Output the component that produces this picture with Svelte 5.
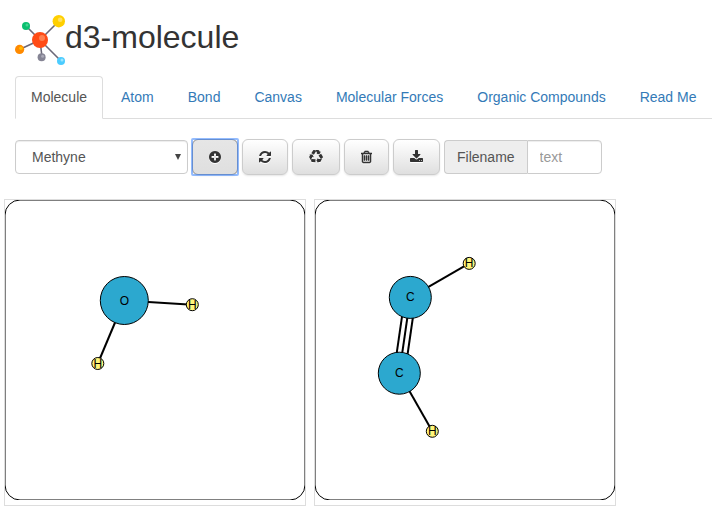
<script>
  const tabs = ['Molecule', 'Atom', 'Bond', 'Canvas', 'Molecular Forces', 'Organic Compounds', 'Read Me'];
  let active = $state('Molecule');
  let compound = $state('Methyne');
  let filename = $state('');

  const actions = [
    {
      label: 'Add molecule', x: 128, units: 1536, width: 12,
      d: 'M1344 960v-128q0-26-19-45t-45-19h-256v-256q0-26-19-45t-45-19h-128q-26 0-45 19t-19 45v256h-256q-26 0-45 19t-19 45v128q0 26 19 45t45 19h256v256q0 26 19 45t45 19h128q26 0 45-19t19-45v-256h256q26 0 45-19t19-45zm320-64q0 209-103 385.500t-279.500 279.500-385.500 103-385.500-103-279.500-279.500-103-385.500 103-385.500 279.500-279.500 385.500-103 385.500 103 279.500 279.500 103 385.500z'
    },
    {
      label: 'Refresh', x: 128, units: 1536, width: 12,
      d: 'M1639 1056q0 5-1 7-64 268-268 434.500t-478 166.500q-146 0-282.500-55t-243.500-157l-129 129q-19 19-45 19t-45-19-19-45v-448q0-26 19-45t45-19h448q26 0 45 19t19 45-19 45l-137 137q71 66 161 102t187 36q134 0 250-65t186-179q11-17 53-117 8-23 30-23h192q13 0 22.500 9.500t9.500 22.500zm25-800v448q0 26-19 45t-45 19h-448q-26 0-45-19t-19-45 19-45l138-138q-148-137-349-137-134 0-250 65t-186 179q-11 17-53 117-8 23-30 23h-199q-13 0-22.500-9.500t-9.500-22.500v-7q65-268 270-434.500t480-166.500q146 0 284 55.500t245 156.500l130-129q19-19 45-19t45 19 19 45z'
    },
    {
      label: 'Recycle', x: 0, units: 1792, width: 14,
      d: 'M836 1169l-15 368-2 22-420-29q-36-3-67-31.500t-47-65.500q-11-27-14.500-55t4-65 12-55 21.500-64 19-53q78 12 509 28zm-387-586l180 379-147-92q-63 72-111.500 144.500t-72.500 125-39.500 94.500-18.500 63l-4 21-190-357q-17-26-18-56t6-47l8-18q35-63 114-188l-140-86zm1231 517l-188 359q-12 29-36.500 46.500t-43.500 20.500l-18 4q-71 7-219 12l8 164-230-367 211-362 7 173q170 16 283 5t170-33zm-785-924q-47 63-265 435l-317-187-19-12 225-356q20-31 60-45t80-10q24 2 48.500 12t42 21 41.500 33 36 34.500 36 39.500 32 35zm655 307l212 363q18 37 12.500 76t-27.500 74q-13 20-33 37t-38 28-48.500 22-47 16-51.500 14-46 12q-34-72-265-436l313-195zm-143-226l142-83-220 373-419-20 151-86q-34-89-75-166t-75.500-123.500-64.500-80-47-46.500l-17-13 405 1q31-3 58 10.500t39 28.500l11 15q39 61 112 190z'
    },
    {
      label: 'Delete', x: 192, units: 1408, width: 11, weight: 70,
      d: 'M704 736v576q0 14-9 23t-23 9h-64q-14 0-23-9t-9-23v-576q0-14 9-23t23-9h64q14 0 23 9t9 23zm256 0v576q0 14-9 23t-23 9h-64q-14 0-23-9t-9-23v-576q0-14 9-23t23-9h64q14 0 23 9t9 23zm256 0v576q0 14-9 23t-23 9h-64q-14 0-23-9t-9-23v-576q0-14 9-23t23-9h64q14 0 23 9t9 23zm128 724v-948h-896v948q0 22 7 40.500t14.500 27 10.500 8.500h832q3 0 10.500-8.500t14.500-27 7-40.500zm-672-1076h448l-48-117q-7-9-17-11h-317q-10 2-17 11zm928 32v64q0 14-9 23t-23 9h-96v948q0 83-47 143.500t-113 60.500h-832q-66 0-113-58.500t-47-141.500v-952h-96q-14 0-23-9t-9-23v-64q0-14 9-23t23-9h309l70-167q15-37 54-63t79-26h320q40 0 79 26t54 63l70 167h309q14 0 23 9t9 23z'
    },
    {
      label: 'Download', x: 64, units: 1664, width: 13,
      d: 'M1344 1344q0-26-19-45t-45-19-45 19-19 45 19 45 45 19 45-19 19-45zm256 0q0-26-19-45t-45-19-45 19-19 45 19 45 45 19 45-19 19-45zm128-224v320q0 40-28 68t-68 28h-1472q-40 0-68-28t-28-68v-320q0-40 28-68t68-28h465l135 136q58 56 136 56t136-56l136-136h464q40 0 68 28t28 68zm-325-569q17 41-14 70l-448 448q-18 19-45 19t-45-19l-448-448q-31-29-14-70 17-39 59-39h256v-448q0-26 19-45t45-19h256q26 0 45 19t19 45v448h256q42 0 59 39z'
    }
  ];

  const molecules = [
    {
      name: 'Water',
      bonds: [[119.3, 100.5, 187.3, 104.7], [119.3, 100.5, 92.8, 163.5]],
      atoms: [
        { symbol: 'O', x: 119.3, y: 100.5, r: 24 },
        { symbol: 'H', x: 187.3, y: 104.7, r: 6 },
        { symbol: 'H', x: 92.8, y: 163.5, r: 6 }
      ]
    },
    {
      name: 'Ethyne',
      bonds: [
        [95.3, 97.4, 84.3, 173.2],
        [89.9, 96.6, 78.9, 172.4],
        [100.7, 98.2, 89.7, 174],
        [95.3, 97.4, 154.2, 63.4],
        [84.3, 173.2, 117.3, 231.3]
      ],
      atoms: [
        { symbol: 'C', x: 95.3, y: 97.4, r: 21 },
        { symbol: 'C', x: 84.3, y: 173.2, r: 21 },
        { symbol: 'H', x: 154.2, y: 63.4, r: 6 },
        { symbol: 'H', x: 117.3, y: 231.3, r: 6 }
      ]
    }
  ];
</script>

<div class="page">
  <header>
    <svg class="logo" viewBox="0 0 50 50" aria-hidden="true">
      <g stroke="#6b6878" stroke-width="1.6">
        <path d="M25 25 44 6M25 25 11 11M25 25 4.500 34.500M25 25 27 42M25 25 46 46" />
      </g>
      <circle cx="43.800" cy="6.200" r="6.200" fill="#ffcf00" />
      <circle cx="45.200" cy="4.700" r="2.300" fill="#ffe15e" />
      <circle cx="11" cy="11" r="4" fill="#0abf70" />
      <circle cx="12" cy="10" r="1.500" fill="#46d48f" />
      <circle cx="4.600" cy="34.400" r="4.600" fill="#ff8a00" />
      <circle cx="5.900" cy="33.200" r="1.800" fill="#ffbd00" />
      <circle cx="26.600" cy="42.300" r="4" fill="#858494" />
      <circle cx="27.600" cy="41.300" r="1.500" fill="#aaa9b7" />
      <circle cx="46" cy="46" r="4" fill="#4cccff" />
      <circle cx="47" cy="45" r="1.500" fill="#9be5ff" />
      <circle cx="25" cy="25" r="8" fill="#ff4b16" />
      <circle cx="27" cy="23" r="3" fill="#ff8050" />
    </svg>
    <h1>d3-molecule</h1>
  </header>

  <nav>
    {#each tabs as tab}
      <a href="#{tab.toLowerCase().replace(' ', '-')}" class:active={active === tab} onclick={() => (active = tab)}>{tab}</a>
    {/each}
  </nav>

  <div class="toolbar">
    <div class="select">
      <select aria-label="Compound" bind:value={compound}>
        <option>Methyne</option>
        <option>Water</option>
        <option>Ethyne</option>
      </select>
      <svg class="caret" viewBox="0 0 6 6" aria-hidden="true"><path d="M0 0h6L3 6z" /></svg>
    </div>
    {#each actions as action, i}
      <button type="button" class:focused={i === 0} aria-label={action.label}>
        <svg viewBox="{action.x} 0 {action.units} 1792" style:width="{action.width}px" aria-hidden="true">
          <path d={action.d} stroke="#333" stroke-width={action.weight ?? 0} />
        </svg>
      </button>
    {/each}
    <div class="group">
      <label for="filename">Filename</label>
      <input id="filename" type="text" placeholder="text" bind:value={filename} />
    </div>
  </div>

  <main>
    {#each molecules as molecule}
      <div class="frame">
        <svg width="300" height="300" role="img" aria-label={molecule.name}>
          <rect width="300" height="300" rx="15" fill="none" stroke="#000" />
          {#each molecule.bonds as [x1, y1, x2, y2]}
            <line {x1} {y1} {x2} {y2} />
          {/each}
          {#each molecule.atoms as atom}
            <circle class="atom" class:hydrogen={atom.symbol === 'H'} cx={atom.x} cy={atom.y} r={atom.r} />
            <text x={atom.x} y={atom.y} dy="4">{atom.symbol}</text>
          {/each}
        </svg>
      </div>
    {/each}
  </main>
</div>

<style>
  :global(body) {
    margin: 0;
    background: #fff;
  }
  .page {
    overflow: hidden;
    padding-bottom: 16px;
    font: 14px/20px "Liberation Sans", Arial, sans-serif;
    color: #333;
  }
  .page * {
    box-sizing: border-box;
  }
  header {
    display: flex;
    padding: 15px 15px 11px;
  }
  .logo {
    width: 50px;
    height: 50px;
    overflow: visible;
  }
  h1 {
    margin: 4px 0 0;
    font-size: 32px;
    line-height: 36px;
    font-weight: 400;
  }
  nav {
    display: flex;
    gap: 2px;
    margin-left: 15px;
    border-bottom: 1px solid #ddd;
    white-space: nowrap;
  }
  nav a {
    flex: none;
    padding: 10px 15px;
    margin-bottom: -1px;
    border: 1px solid transparent;
    border-radius: 4px 4px 0 0;
    color: #337ab7;
    line-height: 21px;
    text-decoration: none;
  }
  nav a.active {
    border-color: #ddd #ddd #fff;
    background: #fff;
    color: #555;
  }
  .toolbar {
    display: flex;
    align-items: center;
    gap: 4px;
    padding: 20px 15px 24px;
  }
  .select {
    position: relative;
    width: 173px;
  }
  select,
  input {
    display: block;
    height: 34px;
    border: 1px solid #ccc;
    background: #fff;
    color: #555;
    font: inherit;
    box-shadow: inset 0 1px 1px rgba(0, 0, 0, 0.075);
  }
  select {
    width: 100%;
    padding: 0 16px;
    border-radius: 4px;
    appearance: none;
  }
  .caret {
    position: absolute;
    top: 14px;
    right: 7px;
    width: 6px;
    height: 6px;
    fill: #444;
    pointer-events: none;
  }
  button {
    display: flex;
    align-items: center;
    height: 36px;
    padding: 0 16px;
    border: 1px solid #ccc;
    border-radius: 6px;
    background: linear-gradient(#fff, #dfdfdf);
    box-shadow: 0 1px 2px rgba(0, 0, 0, 0.1);
  }
  button svg {
    height: 14px;
    fill: #333;
    filter: drop-shadow(0 1px 0 #fff);
  }
  button.focused {
    position: relative;
    border-color: #8c8c8c;
    background: linear-gradient(#e6e6e6, #dfdfdf);
  }
  button.focused::after {
    content: "";
    position: absolute;
    inset: -2px;
    border: 2px solid rgba(77, 144, 254, 0.6);
    border-radius: 2px;
  }
  .group {
    display: flex;
  }
  label {
    padding: 6px 12px;
    border: 1px solid #ccc;
    border-right: 0;
    border-radius: 4px 0 0 4px;
    background: #eee;
    color: #555;
  }
  input {
    width: 75px;
    padding: 6px 12px;
    border-radius: 0 4px 4px 0;
  }
  input::placeholder {
    color: #999;
    opacity: 1;
  }
  main {
    display: flex;
    flex-wrap: wrap;
    gap: 8px;
    padding: 0 4px;
  }
  .frame {
    padding-bottom: 5px;
    border: 1px solid #ddd;
  }
  .frame svg {
    display: block;
  }
  line {
    stroke: #000;
    stroke-width: 2;
  }
  .atom {
    fill: #2ca8cf;
    stroke: #000;
  }
  .hydrogen {
    fill: #fff57a;
  }
  text {
    fill: #000;
    font-size: 12px;
    text-anchor: middle;
  }
</style>
